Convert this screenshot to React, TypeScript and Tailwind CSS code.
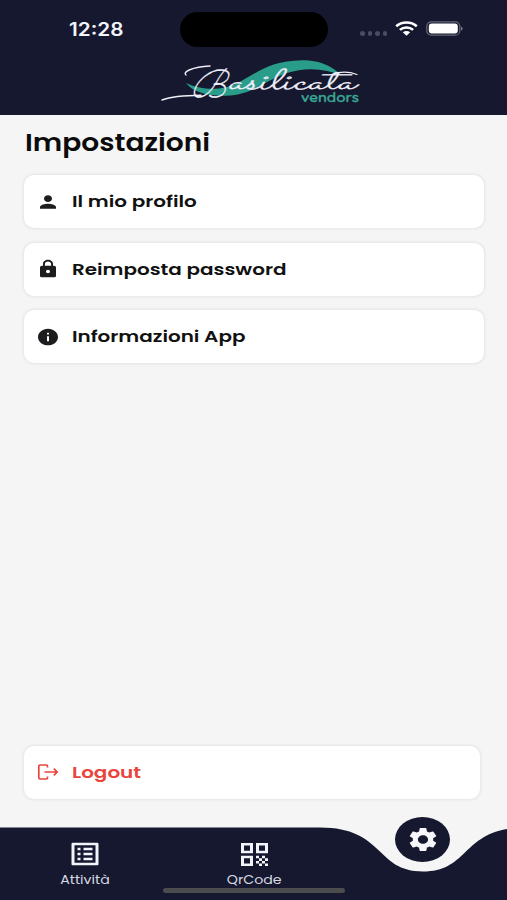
import React from "react";
import { MdInfo, MdListAlt, MdLock, MdPerson, MdSettings } from "react-icons/md";

const NAVY = "#15182e";

interface SettingsCardProps {
  title: string;
  icon: React.ReactNode;
  className?: string;
  titleClass?: string;
}

function SettingsCard({
  title,
  icon,
  className = "",
  titleClass = "text-[#111]",
}: SettingsCardProps) {
  return (
    <button
      className={`flex h-[53px] items-center rounded-[10px] bg-white pl-3 text-left shadow-[0_0_3px_1px_rgba(0,0,0,0.07)] ${className}`}
    >
      {icon}
      <span
        className={`ml-3 mt-px origin-left scale-x-[1.208] whitespace-nowrap text-[16.5px] font-semibold leading-6 ${titleClass}`}
      >
        {title}
      </span>
    </button>
  );
}

function LogoutIcon() {
  return (
    <svg
      className="h-5 w-6"
      viewBox="0 0 24 20"
      fill="none"
      stroke="#e8453c"
      strokeWidth="1.7"
    >
      <path d="M11.5 5.6V4.2Q11.5 3 10.3 3H4Q2.8 3 2.8 4.2V15.8Q2.8 17 4 17H10.3Q11.5 17 11.5 15.8V14.4" />
      <path d="M8.5 10H21M17.8 6.7L21.2 10L17.8 13.3" />
    </svg>
  );
}

function QrIcon() {
  return (
    <svg
      className="h-[23px] w-[27px]"
      viewBox="0 0 18 18"
      preserveAspectRatio="none"
      fill="#f3f3fa"
    >
      <path
        fillRule="evenodd"
        d="M0 0h8v8H0zM2 2v4h4V2zM10 0h8v8h-8zM12 2v4h4V2zM0 10h8v8H0zM2 12v4h4v-4z"
      />
      <path d="M10 10h2v2h-2zM14 10h2v2h-2zM12 12h2v2h-2zM16 12h2v2h-2zM10 14h2v2h-2zM14 14h2v2h-2zM12 16h2v2h-2zM16 16h2v2h-2z" />
    </svg>
  );
}

function Logo() {
  return (
    <svg className="h-[57px] w-[210px] overflow-visible" viewBox="155 56 210 57">
      <path
        d="M186 83C200 90 222 91 236 84C258 72 270 61 302 60.3C322 60.3 332 67 343 76C325 68 305 67 287 73C262 82 252 95 226 95.7C206 96 193 92 186 83Z"
        fill="#2a9d8a"
      />
      <g fill="none" stroke="#f0eefa" strokeLinecap="round">
        <path d="M162 100C170 97 184 95.5 201 95.3" strokeWidth="1.4" />
        <path d="M186 75C182 72 192 67 210 66" strokeWidth="1.4" />
        <path d="M332 74.5C340 71.5 350 72 357 74.5" strokeWidth="1.2" />
      </g>
      <g
        fill="#f0eefa"
        stroke="#f0eefa"
        strokeWidth="0.2"
        fontFamily="Sacramento, Allura, 'Great Vibes', 'Dancing Script', Caveat, Lato, cursive"
      >
        <text
          transform="translate(191 96.5) skewX(-18)"
          fontSize="39"
          textLength="34"
          lengthAdjust="spacingAndGlyphs"
        >
          B
        </text>
        <text
          transform="translate(228 88.5) skewX(-22)"
          fontSize="29"
          textLength="127"
          lengthAdjust="spacingAndGlyphs"
        >
          asilicata
        </text>
      </g>
      <text
        x="301"
        y="101.5"
        fill="#3aa896"
        stroke="#3aa896"
        strokeWidth="0.3"
        fontFamily="Quicksand, Inter, sans-serif"
        fontSize="13"
        fontWeight="600"
        textLength="58"
        lengthAdjust="spacingAndGlyphs"
      >
        vendors
      </text>
    </svg>
  );
}

function StatusBar() {
  return (
    <div className="flex h-[58px] items-start">
      <div className="w-[180px] pl-[69px] pt-[18px]">
        <span className="inline-block origin-left scale-x-[1.15] font-['Inter',sans-serif] text-[18px] font-semibold leading-6 text-[#f3f3fa]">
          12:28
        </span>
      </div>
      <div className="mt-3 h-[35px] w-[148px] rounded-full bg-black" />
      <div className="ml-8 mt-[31px] flex gap-[3px]">
        {[0, 1, 2, 3].map((dot) => (
          <span key={dot} className="h-[4.5px] w-[4.5px] rounded-full bg-[#4b4d61]" />
        ))}
      </div>
      <svg className="ml-2 mt-[21px] h-[15px] w-[23px]" viewBox="0 0 23 15">
        <g fill="none" stroke="#fff" strokeWidth="2.6">
          <path d="M1.2 5.2C7 .2 16 .2 21.8 5.2" />
          <path d="M4.9 8.9C8.5 5.7 14.5 5.7 18.1 8.9" />
        </g>
        <path d="M7.8 11.3Q11.5 8.6 15.2 11.3L11.5 14.8Z" fill="#fff" />
      </svg>
      <svg className="ml-2 mt-[21px] h-[15px] w-[39px]" viewBox="0 0 39 15">
        <rect x="0.8" y="0.8" width="33" height="13.4" rx="4.5" fill="none" stroke="#666879" strokeWidth="1.2" />
        <rect x="2.8" y="2.5" width="29" height="10" rx="3" fill="#fff" />
        <path d="M35 5.2Q38.4 7.5 35 9.8Z" fill="#777989" />
      </svg>
    </div>
  );
}

function BottomNav() {
  return (
    <nav className="relative h-[84px] text-[#d8d9e2]">
      <svg
        className="absolute bottom-0 left-0 h-[73px] w-full"
        viewBox="0 0 507 73"
        preserveAspectRatio="none"
      >
        <path
          d="M0 .5H320C385 .5 375 44.5 423 44.5C471 44.5 461 .5 526 .5V73H0Z"
          fill={NAVY}
        />
      </svg>
      <div className="relative flex">
        <div className="flex w-[170px] flex-col items-center pt-[23px]">
          <MdListAlt className="h-[30px] w-9 text-[#f3f3fa]" preserveAspectRatio="none" />
          <span className="mt-[3px] scale-x-[1.18] text-[12px] leading-4">Attività</span>
        </div>
        <div className="flex w-[168px] flex-col items-center pt-[27px]">
          <QrIcon />
          <span className="mt-[6px] scale-x-[1.18] text-[12px] leading-4">QrCode</span>
        </div>
        <div className="flex w-[169px] justify-center">
          <div className="mt-[1px] flex h-[45px] w-[55px] items-center justify-center rounded-[50%] bg-[#15182e]">
            <MdSettings className="h-[29px] w-[34px] text-[#f6f6fb]" preserveAspectRatio="none" />
          </div>
        </div>
      </div>
      <div className="absolute bottom-[7.5px] left-[163px] h-[5px] w-[182px] rounded-full bg-[#4b4c4e]" />
    </nav>
  );
}

export default function App() {
  const iconClass = "h-5 w-6 text-[#1d1d1f]";
  return (
    <div className="flex h-[900px] w-[507px] flex-col overflow-hidden bg-[#f5f5f5] font-['Poppins','Inter',sans-serif]">
      <header className="h-[115px] bg-[#15182e]">
        <StatusBar />
        <div className="-mt-[2px] ml-[155px]">
          <Logo />
        </div>
      </header>
      <main className="flex flex-1 flex-col pl-6 pr-[23px]">
        <h1 className="ml-px mt-3 w-max origin-left scale-x-[1.17] text-[24px] font-semibold leading-8 text-[#0b0b0c]">
          Impostazioni
        </h1>
        <div className="mt-4 flex flex-col gap-[14.5px]">
          <SettingsCard
            title="Il mio profilo"
            icon={<MdPerson className={iconClass} preserveAspectRatio="none" />}
          />
          <SettingsCard
            title="Reimposta password"
            icon={<MdLock className={iconClass} preserveAspectRatio="none" />}
          />
          <SettingsCard
            title="Informazioni App"
            icon={<MdInfo className={iconClass} preserveAspectRatio="none" />}
          />
        </div>
        <SettingsCard
          title="Logout"
          className="mb-[17.5px] mr-1 mt-auto"
          titleClass="text-[#e8453c]"
          icon={<LogoutIcon />}
        />
      </main>
      <BottomNav />
    </div>
  );
}
